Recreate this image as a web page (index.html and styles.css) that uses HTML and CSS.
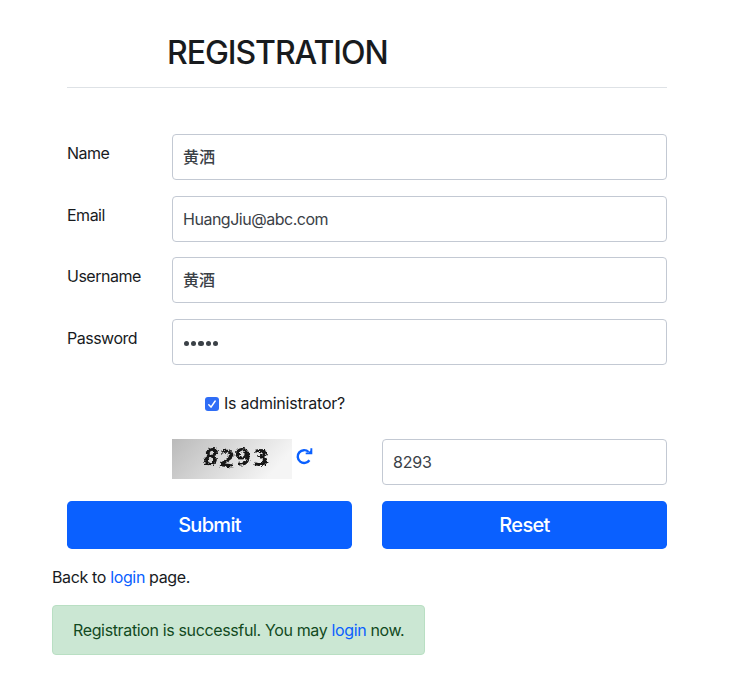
FILE: index.html
```html
<!DOCTYPE html>
<html lang="en">
<head>
<meta charset="utf-8">
<title>Registration</title>
<link rel="stylesheet" href="styles.css">
</head>
<body>
<main class="page">
  <form class="form">
    <h2 class="title"><span>REGISTRATION</span></h2>
    <div class="row"><label for="name">Name</label><input class="field cjk" id="name" type="text" value="黄洒"></div>
    <div class="row"><label for="email">Email</label><input class="field email" id="email" type="text" value="HuangJiu@abc.com"></div>
    <div class="row"><label for="user">Username</label><input class="field cjk" id="user" type="text" value="黄酒"></div>
    <div class="row"><label for="pass">Password</label><div class="field password" id="pass"><i></i><i></i><i></i><i></i><i></i></div></div>
    <label class="check">
      <svg width="14" height="14" viewBox="0 0 14 14"><rect width="14" height="14" rx="3" fill="#2f6df6"/><path d="M3.8 7.7 6 10.1 10.2 4" fill="none" stroke="#fff" stroke-width="1.5" stroke-linecap="round" stroke-linejoin="round"/></svg>
      <span>Is administrator?</span>
    </label>
    <div class="pair captcha-row">
      <div class="captcha">
        <svg class="captcha-image" width="120" height="40" viewBox="0 0 120 40">
          <defs>
            <linearGradient id="bg" x1="0" y1="0" x2="1" y2="0.3"><stop offset="0" stop-color="#bababa"/><stop offset="1" stop-color="#f5f5f5"/></linearGradient>
            <filter id="rough" x="-10%" y="-20%" width="120%" height="140%"><feTurbulence type="fractalNoise" baseFrequency="0.6" numOctaves="2" seed="4"/><feDisplacementMap in="SourceGraphic" scale="4" xChannelSelector="R" yChannelSelector="G"/><feGaussianBlur stdDeviation="0.45"/></filter>
          </defs>
          <rect width="120" height="40" fill="url(#bg)"/>
          <g class="captcha-text" filter="url(#rough)">
            <text transform="translate(30 26) skewX(-10)" textLength="15" lengthAdjust="spacingAndGlyphs">8</text>
            <text transform="translate(46 27) rotate(6)" textLength="16" lengthAdjust="spacingAndGlyphs">2</text>
            <text transform="translate(64 27) rotate(-8)" textLength="16" lengthAdjust="spacingAndGlyphs">9</text>
            <text transform="translate(81 27)" textLength="16" lengthAdjust="spacingAndGlyphs">3</text>
          </g>
        </svg>
        <svg class="refresh" width="18" height="18" viewBox="0 0 18 18"><path d="M12.6 5A6.4 6.4 0 1 0 13.4 13.2" fill="none" stroke="#0a60ff" stroke-width="2.4"/><path d="M14.4 1.2H16.3V7.3H9.7V5.4H12.4L14.4 3.6Z" fill="#0a60ff"/></svg>
      </div>
      <input class="field code" type="text" value="8293" aria-label="Code">
    </div>
    <div class="pair">
      <button type="button">Submit</button>
      <button type="button">Reset</button>
    </div>
  </form>
  <p class="back">Back to <a>login</a> page.</p>
  <div class="alert">Registration is successful. You may <a>login</a> now.</div>
</main>
</body>
</html>
```

FILE: styles.css
```css
* { box-sizing: border-box; }
body {
  margin: 0;
  background: #fff;
  color: #181b1e;
  font: 16px/24px Inter, "Noto Sans CJK SC", sans-serif;
  letter-spacing: -0.36px;
}
.page { padding: 32px 52px 0; }
.form { width: 600px; margin-left: 15px; }
.title {
  height: 56px;
  margin: 0 0 46px;
  padding-left: 100px;
  border-bottom: 1px solid #dee2e6;
  font-size: 32px;
  line-height: 42px;
  font-weight: 500;
  letter-spacing: -1.05px;
}
.row {
  display: grid;
  grid-template-columns: 105px 495px;
  margin-bottom: 15.67px;
}
.row label { padding-top: 7px; letter-spacing: -0.5px; }
.field {
  width: 100%;
  height: 46px;
  padding: 0 10px;
  border: 1px solid #c3c9d3;
  border-radius: 4px;
  background: #fff;
  color: #3b4147;
  font: inherit;
  letter-spacing: inherit;
  outline: none;
}
.cjk { padding-bottom: 2px; letter-spacing: 0; font-weight: 500; }
.email { letter-spacing: -0.48px; }
.code { letter-spacing: -0.2px; }
.password { display: flex; align-items: center; gap: 2px; padding-top: 3px; padding-left: 11px; }
.password i { width: 5.2px; height: 5.2px; border-radius: 50%; background: #3b4147; }
.check {
  display: flex;
  align-items: center;
  gap: 5px;
  height: 24px;
  margin: 27px 0 23px 138px;
  letter-spacing: -0.22px;
}
.check span { margin-top: -2px; }
.pair { display: grid; grid-template-columns: 285px 285px; gap: 30px; }
.captcha-row { margin-bottom: 16px; }
.captcha { display: flex; gap: 4px; padding-left: 105px; }
.captcha-text { font: bold 23px "DejaVu Sans", sans-serif; fill: #161616; }
.refresh { margin-top: 8px; }
button {
  height: 48px;
  border: 0;
  border-radius: 4.8px;
  background: #0a60ff;
  color: #fff;
  font: 500 20px Inter, sans-serif;
  letter-spacing: -0.7px;
}
a { color: #0a60ff; }
.back { margin: 16px 0; }
.alert {
  width: 373px;
  height: 50px;
  padding: 12px 20px;
  border: 1px solid #b9dfc3;
  border-radius: 4px;
  background: #cbe7d3;
  color: #124a1e;
  white-space: nowrap;
}
```
